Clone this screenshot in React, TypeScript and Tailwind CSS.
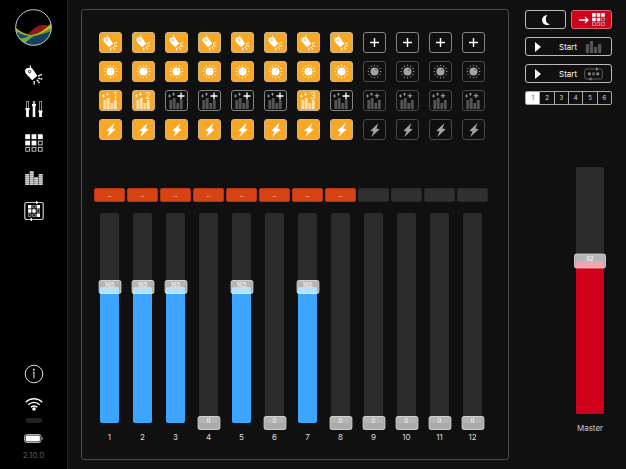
import { useState } from "react";
import type { ReactNode } from "react";

const channels = [
  { value: 165, preset: "1" },
  { value: 165, preset: "2" },
  { value: 165, preset: "+" },
  { value: 0, preset: "+" },
  { value: 165, preset: "+" },
  { value: 0, preset: "+" },
  { value: 165, preset: "3" },
  { value: 0, preset: "+" },
  { value: 0, preset: "" },
  { value: 0, preset: "" },
  { value: 0, preset: "" },
  { value: 0, preset: "" },
];

function Logo() {
  return (
    <svg viewBox="45 27 111 111" className="size-[37px]" aria-hidden="true">
      <defs>
        <clipPath id="disc">
          <circle cx="100.5" cy="82.5" r="53" />
        </clipPath>
      </defs>
      <g clipPath="url(#disc)">
        <path d="M76 106C94 100 100 76 128 75c12 0 18 2 30 8v20H76z" fill="#8e1a1c" />
        <path d="M44 80c14 14 28 22 46 24 28 2 44-16 68-38v34c-20 0-30 10-50 14-26 4-46-4-64-22z" fill="#c9b51c" />
        <path d="M44 88c14 12 28 18 48 19 30 0 44-14 66-26v60H44z" fill="#4f9a3c" />
        <path d="M44 90c14 11 26 16 42 17-8 6-14 10-26 8-8-4-14-12-16-18z" fill="#1b4a66" />
        <path d="M60 115c14 2 24-8 44-9-10 8-20 14-30 24z" fill="#79a545" />
        <path d="M68 138c12-10 20-24 36-29 20-6 32-10 54-17v50H68z" fill="#15405e" />
      </g>
      <circle cx="100.5" cy="82.5" r="53.5" fill="none" stroke="#c4c8ca" strokeWidth="3" />
    </svg>
  );
}

function LampIcon({ className, lens }: { className: string; lens: string }) {
  return (
    <svg viewBox="0 0 18 20" className={className} fill="none" stroke="currentColor" aria-hidden="true">
      <path d="M5 .5c1 1 .6 2.500 0 4" strokeWidth="1.200" />
      <path d="M.2 5.200Q.6 3.400 2.400 3L5.900 2.700Q6.700 2.700 7.200 3.400L12.400 10.800 7.200 15.200.8 8.400Q-.1 7 .2 5.200z" fill="currentColor" stroke="none" />
      <circle cx="4.600" cy="6.600" r="1.200" stroke={lens} strokeWidth=".8" />
      <path d="M13.300 11l3.500-1.600M13.400 13.200l4.300 1M12 14.800l2.600 3.600M9.300 16v3.400" strokeWidth="1.500" strokeDasharray="1.800 .4" />
    </svg>
  );
}

function MixerIcon() {
  return (
    <svg viewBox="0 0 18 18" className="size-[18px]" fill="none" stroke="#fff" aria-hidden="true">
      <path d="M2.500 1v16M15.500 1v16" stroke="#aaa" strokeWidth="2.600" />
      <path d="M2.500 1.800v6M15.500 1.800v9" stroke="#000" strokeWidth="1" />
      <path d="M9 1v4" stroke="#aaa" strokeWidth="2.400" />
      <path d="M2.500 9v8M9 5v12M15.500 12v5" strokeWidth="2.600" />
      <path d="M.5 9h4M7 5h4M13.500 11.500h4" strokeWidth="2" />
    </svg>
  );
}

const filledCells = [0, 1, 2, 3, 4];

function GridIcon({ className }: { className: string }) {
  return (
    <svg viewBox="0 0 18 18" className={className} aria-hidden="true">
      {Array.from({ length: 9 }, (_, i) => (
        <rect
          key={i}
          x={(i % 3) * 6.3 + 0.8}
          y={Math.floor(i / 3) * 6.3 + 0.8}
          width="3.800"
          height="3.800"
          fill={filledCells.includes(i) ? "#fff" : "none"}
          stroke={filledCells.includes(i) ? "#fff" : "#bbb"}
          strokeWidth="1"
        />
      ))}
    </svg>
  );
}

function BarsIcon({ className }: { className: string }) {
  return (
    <svg viewBox="0 0 18 15" className={className} fill="none" stroke="currentColor" strokeWidth="3.900" aria-hidden="true">
      <path d="M2.200 15V4M6.700 15V1M11.200 15V7M15.700 15V4" stroke="#777" />
      <path d="M2.200 15V4M6.700 15V1M11.200 15V7M15.700 15V4" strokeDasharray="1.400 .6" />
    </svg>
  );
}

function ChaseIcon() {
  return (
    <svg viewBox="0 0 20 20" className="size-5" fill="none" stroke="#ccc" aria-hidden="true">
      <path d="M12 1.500H2.500Q.8 1.500.8 3.500v13q0 2 1.700 2H5M8 18.500h9.500q1.700 0 1.700-2v-13q0-2-1.700-2H15" strokeWidth="1.200" />
      <path d="M12-.3l3 1.800-3 1.800zM8 16.700l-3 1.800 3 1.800z" fill="#fff" stroke="none" />
      <path d="M4 4h3.400v3.400H4zM12.600 4H16v3.400h-3.400zM4 8.300h3.400v3.400H4zM8.300 8.300h3.400v3.400H8.300zM12.600 12.600H16V16h-3.400z" fill="#fff" stroke="none" />
      <path d="M8.700 4.400h2.600V7H8.700zM13 8.700h2.600v2.600H13zM4.400 13H7v2.600H4.400zM8.700 13h2.600v2.600H8.700z" strokeWidth=".8" stroke="#aaa" />
    </svg>
  );
}

function InfoIcon() {
  return (
    <svg viewBox="0 0 20 20" className="size-5" fill="none" stroke="#ddd" aria-hidden="true">
      <circle cx="10" cy="10" r="8.800" strokeWidth="1" />
      <path d="M8.800 8.300H10V14.300" strokeWidth="1.100" />
      <circle cx="9.900" cy="5.700" r=".9" fill="#fff" stroke="none" />
    </svg>
  );
}

function WifiIcon() {
  return (
    <svg viewBox="0 0 18 14" className="h-[14px] w-[18px]" fill="none" stroke="#fff" strokeWidth="1.400" aria-hidden="true">
      <path d="M.8 5.200a11.600 11.600 0 0 1 16.400 0M3.300 7.800a8 8 0 0 1 11.400 0M5.800 10.300a4.500 4.500 0 0 1 6.400 0" />
      <circle cx="9" cy="12" r="1.800" fill="#fff" stroke="none" />
    </svg>
  );
}

function BatteryIcon() {
  return (
    <svg viewBox="0 0 19 9" className="h-[9px] w-[19px]" aria-hidden="true">
      <rect x=".5" y=".5" width="16.500" height="8" rx="2" fill="none" stroke="#aaa" />
      <rect x="1.600" y="1.600" width="14.300" height="5.800" rx=".8" fill="#fff" />
      <path d="M17.800 3v3q1-.4 1-1.500t-1-1.500z" fill="#aaa" />
    </svg>
  );
}

function SunIcon({ knob }: { knob: string }) {
  const rays = Array.from({ length: 12 }, (_, i) => (i * Math.PI) / 6);
  return (
    <svg viewBox="0 0 15 15" className="size-[15px]" aria-hidden="true">
      <circle cx="7.500" cy="7.500" r="4" fill="currentColor" />
      <circle cx="9" cy="5.800" r=".6" fill={knob} />
      {rays.map((a) => (
        <circle key={a} cx={7.5 + 6.2 * Math.cos(a)} cy={7.5 + 6.2 * Math.sin(a)} r=".65" fill="currentColor" />
      ))}
    </svg>
  );
}

function PresetIcon({ label }: { label: string }) {
  const numbered = label !== "" && label !== "+";
  const bars = numbered ? "#fde0b0" : "#555";
  const stars = numbered ? "#fff3dc" : "#999";
  return (
    <svg viewBox="0 0 21 19" className="h-[19px] w-[21px]" fill="none" aria-hidden="true">
      <path d="M4.800 18V9M8.200 18V7M11.800 18v-6M15.300 18V9" stroke={bars} strokeWidth="2.800" />
      <path d="M3.500 3.500v3M2 5h3M7.500 1.700v3M6 3.200h3" stroke={stars} strokeWidth=".9" />
      {label === "" && <path d="M13 2.500v4.500M10.700 4.800h4.600" stroke="#aaa" strokeWidth="1" />}
      {label === "+" && <path d="M15 1.500v7M11.500 5h7" stroke="#fff" strokeWidth="1.300" />}
      {numbered && (
        <text x="15" y="8" fill="#fff3dc" fontSize="9" textAnchor="middle" fontFamily="Inter, sans-serif">
          {label}
        </text>
      )}
    </svg>
  );
}

function BoltIcon() {
  return (
    <svg viewBox="0 0 10 14" className="h-[14px] w-[10px]" fill="currentColor" aria-hidden="true">
      <path d="M8.500 0L.4 7.700l3.100.7L1.200 14 9.700 6.200l-3.300-.8z" />
    </svg>
  );
}

function PlayIcon() {
  return (
    <svg viewBox="0 0 6 10" className="h-[10px] w-[6px] shrink-0" fill="#fff" aria-hidden="true">
      <path d="M0 0l6 5-6 5z" />
    </svg>
  );
}

function LoopIcon() {
  return (
    <svg viewBox="0 0 19 14" className="h-[14px] w-[19px] shrink-0" fill="none" stroke="#666" aria-hidden="true">
      <path d="M12 2H2.500Q.7 2 .7 3.500v7Q.7 12 2.500 12H5M7.500 12h9q1.800 0 1.800-1.500v-7Q18.300 2 16.500 2H15" strokeWidth=".9" />
      <path d="M12 .3L15 2l-3 1.700zM7.500 10.300l-3 1.700 3 1.700z" fill="#888" stroke="none" />
      <path d="M4 5.500h2.800v2.800H4zM12.400 5.500h2.800v2.800h-2.800z" fill="#888" stroke="none" />
      <path d="M8.600 5.900h2v2h-2z" strokeWidth=".8" stroke="#888" />
    </svg>
  );
}

function Pad({ label, on, dim, children }: { label: string; on: boolean; dim?: boolean; children: ReactNode }) {
  const look = on
    ? "bg-[#f9a825] border-[#cdb78c] text-white"
    : dim
      ? "border-[#484848] text-[#a3a3a3]"
      : "border-[#858585] text-white";
  return (
    <button aria-label={label} className={`flex h-[21px] w-[23px] items-center justify-center rounded-[3px] border ${look}`}>
      {children}
    </button>
  );
}

type FaderProps = {
  label: string;
  initial: number;
  max: number;
  track: string;
  fill: string;
  thumb: string;
};

function Fader({ label, initial, max, track, fill, thumb }: FaderProps) {
  const [value, setValue] = useState(initial);
  const level = `${(value / max) * 100}%`;
  return (
    <div className={`relative min-h-32 flex-1 rounded-[2px] bg-[#2b2b2b] ${track}`}>
      <div className={`absolute inset-x-0 bottom-0 rounded-[2px] ${fill}`} style={{ height: level }} />
      <div
        className={`absolute left-1/2 -translate-x-1/2 translate-y-1/2 rounded-[3px] border border-white/40 bg-white/65 text-center text-[6px] leading-[7px] text-white ${thumb}`}
        style={{ bottom: level }}
      >
        {value}
      </div>
      <input
        type="range"
        aria-label={label}
        min={0}
        max={max}
        value={value}
        onChange={(e) => setValue(Number(e.target.value))}
        className="absolute inset-0 h-full w-full cursor-pointer opacity-0 [direction:rtl] [writing-mode:vertical-lr]"
      />
    </div>
  );
}

function Sidebar() {
  return (
    <nav className="flex w-[68px] shrink-0 flex-col items-center border-r border-[#1f1f1f] bg-black pt-[9px] pb-2">
      <Logo />
      <div className="mt-[19px] flex flex-col items-center gap-[14px]">
        <button aria-label="Fixtures" className="flex h-5 items-center">
          <LampIcon className="h-5 w-[18px]" lens="#000" />
        </button>
        <button aria-label="Mixer" className="flex h-5 items-center">
          <MixerIcon />
        </button>
        <button aria-label="Scenes" className="flex h-5 items-center">
          <GridIcon className="size-[18px]" />
        </button>
        <button aria-label="Presets" className="flex h-5 items-center text-[#d0d0d0]">
          <BarsIcon className="h-[15px] w-[18px]" />
        </button>
        <button aria-label="Chases" className="flex h-5 items-center">
          <ChaseIcon />
        </button>
      </div>
      <div className="mt-auto flex flex-col items-center">
        <button aria-label="Info">
          <InfoIcon />
        </button>
        <div className="mt-[13px]">
          <WifiIcon />
        </div>
        <div className="mt-[7px] h-[5px] w-4 rounded-[2px] bg-[#222]" />
        <div className="mt-[11px]">
          <BatteryIcon />
        </div>
        <p className="mt-[6px] text-[8px] leading-3 text-[#5c5c5c]">2.10.0</p>
      </div>
    </nav>
  );
}

function ChannelPanel() {
  return (
    <main className="my-[9px] ml-[13px] flex flex-1 flex-col rounded-[3px] border border-[#4a4a4a] pt-[22px] pb-4">
      <div className="grid grid-cols-12 justify-items-center gap-y-2 pr-[18px] pl-3">
        {channels.map((_, i) =>
          i < 8 ? (
            <Pad key={i} label={`Fixture ${i + 1}`} on>
              <LampIcon className="h-4 w-[15px]" lens="#f9a825" />
            </Pad>
          ) : (
            <Pad key={i} label={`Add fixture ${i + 1}`} on={false}>
              <svg viewBox="0 0 9 9" className="size-[9px]" stroke="#fff" strokeWidth="1.400" aria-hidden="true">
                <path d="M4.500 0v9M0 4.500h9" />
              </svg>
            </Pad>
          )
        )}
        {channels.map((_, i) => (
          <Pad key={i} label={`Dimmer ${i + 1}`} on={i < 8} dim>
            <SunIcon knob={i < 8 ? "#f9a825" : "#111"} />
          </Pad>
        ))}
        {channels.map((c, i) => (
          <Pad key={i} label={`Preset ${i + 1}`} on={c.preset !== "" && c.preset !== "+"} dim={c.preset === ""}>
            <PresetIcon label={c.preset} />
          </Pad>
        ))}
        {channels.map((_, i) => (
          <Pad key={i} label={`Flash ${i + 1}`} on={i < 8} dim>
            <BoltIcon />
          </Pad>
        ))}
      </div>

      <div className="mt-12 grid flex-1 grid-cols-12 pr-[19px] pl-[11px]">
        {channels.map((c, i) => (
          <div key={i} className="flex flex-col items-center">
            <button
              aria-label={`Channel ${i + 1} name`}
              className={`h-[14px] w-[31px] rounded-[2px] border text-[7px] leading-3 text-white/80 ${
                i < 8 ? "border-[#b5370f] bg-[#d64313]" : "border-[#292929] bg-[#303030]"
              }`}
            >
              {i < 8 ? ".." : ""}
            </button>
            <div className="mt-[11px] flex flex-1 flex-col">
              <Fader
                label={`Channel ${i + 1}`}
                initial={c.value}
                max={255}
                track="w-[19px]"
                fill="bg-[#3ba5ff]"
                thumb="h-[14px] w-[23px]"
              />
            </div>
            <p className="mt-2 text-[8px] leading-3 text-[#ddd]">{i + 1}</p>
          </div>
        ))}
      </div>
    </main>
  );
}

function ControlColumn() {
  const [page, setPage] = useState(1);
  return (
    <aside className="mr-[14px] ml-4 flex w-[87px] shrink-0 flex-col pt-[10px] pb-[35px]">
      <div className="flex flex-col gap-2">
        <div className="grid grid-cols-2 gap-[5px]">
          <button aria-label="Blackout" className="flex h-[19px] items-center justify-center rounded-[3px] border border-[#bbb]">
            <svg viewBox="0 0 8 10" className="h-[10px] w-2" fill="#fff" aria-hidden="true">
              <path d="M5.200 0A5.100 5.100 0 0 0 0 5a5 5 0 0 0 8 4Q4.200 8.700 3.800 5 3.700 1.800 5.200 0z" />
            </svg>
          </button>
          <button aria-label="Go to scenes" className="flex h-[19px] items-center justify-center gap-[3px] rounded-[3px] border border-[#d86a76] bg-[#d0021b]">
            <svg viewBox="0 0 10 8" className="h-2 w-[10px]" fill="none" stroke="#fff" strokeWidth="1.300" aria-hidden="true">
              <path d="M0 4h9M6 1l3 3-3 3" />
            </svg>
            <GridIcon className="size-[13px]" />
          </button>
        </div>
        <button className="flex h-[19px] items-center rounded-[3px] border border-[#bbb] pr-2 pl-[9px] text-[8px]">
          <PlayIcon />
          <span className="flex-1 pl-[18px] text-left">Start</span>
          <svg viewBox="0 0 19 14" className="h-[14px] w-[19px] shrink-0" fill="none" stroke="#555" strokeWidth="3.200" aria-hidden="true">
            <path d="M3.400 13V4M7.500 13V1M11.600 13V7M15.700 13V4" />
          </svg>
        </button>
        <button className="flex h-[19px] items-center rounded-[3px] border border-[#bbb] pr-2 pl-[9px] text-[8px]">
          <PlayIcon />
          <span className="flex-1 pl-[18px] text-left">Start</span>
          <LoopIcon />
        </button>
        <div className="flex h-[14px] divide-x divide-[#aaa] overflow-hidden rounded-[2px] border border-[#aaa]">
          {[1, 2, 3, 4, 5, 6].map((n) => (
            <button
              key={n}
              onClick={() => setPage(n)}
              className={`flex-1 text-[6px] leading-3 ${n === page ? "bg-white text-[#555]" : "text-[#ddd]"}`}
            >
              {n}
            </button>
          ))}
        </div>
      </div>
      <div className="mt-[62px] mr-[6px] flex w-8 flex-1 flex-col items-center self-end">
        <Fader label="Master" initial={62} max={100} track="w-7" fill="bg-[#d0021b]" thumb="h-[15px] w-8" />
        <p className="mt-2 text-[8px] leading-3 text-[#ccc]">Master</p>
      </div>
    </aside>
  );
}

export default function App() {
  return (
    <div className="flex min-h-screen bg-[#101010] font-[Inter,sans-serif] text-white">
      <Sidebar />
      <ChannelPanel />
      <ControlColumn />
    </div>
  );
}
